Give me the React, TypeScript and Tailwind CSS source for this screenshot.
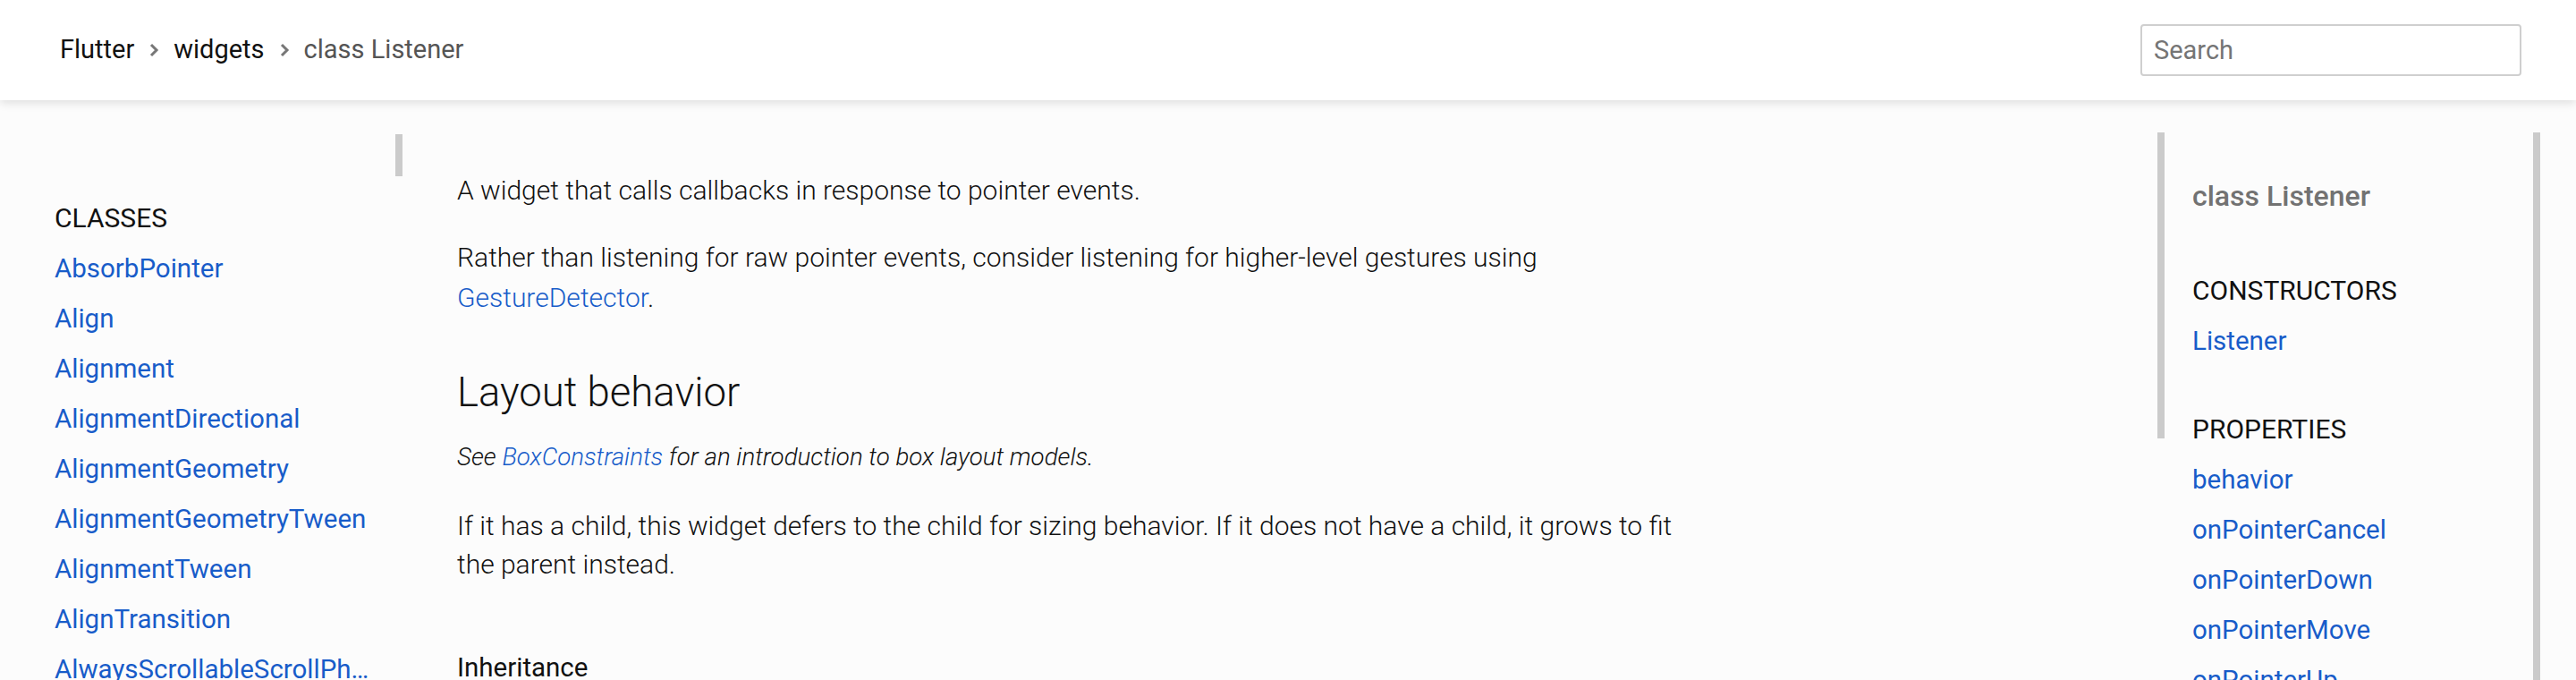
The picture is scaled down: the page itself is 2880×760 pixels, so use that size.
import React from "react";

const leftItems = [
  "AbsorbPointer",
  "Align",
  "Alignment",
  "AlignmentDirectional",
  "AlignmentGeometry",
  "AlignmentGeometryTween",
  "AlignmentTween",
  "AlignTransition",
  "AlwaysScrollableScrollPhysics",
];

const props = ["behavior", "onPointerCancel", "onPointerDown", "onPointerMove", "onPointerUp"];

function Chevron() {
  return (
    <svg width="12" height="18" viewBox="0 0 12 18" className="mx-[16px]">
      <polyline points="3,3 9,9 3,15" fill="none" stroke="#777" strokeWidth="3" />
    </svg>
  );
}

export default function App() {
  return (
    <div className="h-[760px] overflow-hidden bg-[#fcfcfc] font-['Roboto',sans-serif]">
      <header className="relative z-10 flex h-[112px] items-center justify-between bg-white pl-[67px] pr-[61px] shadow-[0_3px_10px_rgba(0,0,0,0.12)]">
        <div className="flex items-center text-[29px] text-[#111]">
          <span>Flutter</span>
          <Chevron />
          <span>widgets</span>
          <Chevron />
          <span className="text-[#555]">class Listener</span>
        </div>
        <input
          placeholder="Search"
          className="h-[58px] w-[426px] rounded-[4px] border-2 border-[#cfcfcf] bg-white px-[13px] text-[29px] text-[#333] outline-none placeholder:text-[#757575]"
        />
      </header>
      <div className="flex">
        <aside className="flex w-[450px] shrink-0">
          <div className="min-w-0 flex-1 pl-[61px] pr-[20px] pt-[104px] text-[29.5px] leading-[56px]">
            <div className="text-[30px] text-[#111]">CLASSES</div>
            {leftItems.map((t) => (
              <div key={t} className="truncate text-[#185cc9]">
                {t}
              </div>
            ))}
          </div>
          <div className="w-[8px] pt-[38px]">
            <div className="h-[47px] bg-[#cbcbcb]" />
          </div>
        </aside>
        <main className="flex min-w-0 flex-1">
          <div className="min-w-0 flex-1 pl-[61px] pt-[79px] text-[30px] font-light leading-[44.8px] text-[#111]">
            <div className="max-w-[1385px]">
              <p>A widget that calls callbacks in response to pointer events.</p>
              <p className="mt-[30px]">
                Rather than listening for raw pointer events, consider listening for higher-level gestures using{" "}
                <span className="text-[#185cc9]">GestureDetector</span>.
              </p>
              <h2 className="mt-[59px] text-[45.5px] font-light leading-[50px]">Layout behavior</h2>
              <p className="mt-[25px] text-[27.7px] italic">
                See <span className="text-[#185cc9]">BoxConstraints</span> for an introduction to box layout models.
              </p>
              <p className="mt-[32px] leading-[43px]">
                If it has a child, this widget defers to the child for sizing behavior. If it does not have a child, it grows to fit the parent instead.
              </p>
              <div className="mt-[72px] text-[29.5px] font-normal">Inheritance</div>
            </div>
          </div>
          <div className="w-[8px] pt-[36px]">
            <div className="h-[342px] bg-[#cbcbcb]" />
          </div>
        </main>
        <aside className="flex w-[420px] shrink-0">
          <div className="min-w-0 flex-1 pl-[31px] pt-[79px] text-[29.5px] leading-[56px]">
            <div className="text-[32px] font-medium text-[#727272]">class Listener</div>
            <div className="mt-[50px] text-[30px] text-[#111]">CONSTRUCTORS</div>
            <div className="text-[#185cc9]">Listener</div>
            <div className="mt-[43px] text-[30px] text-[#111]">PROPERTIES</div>
            {props.map((p) => (
              <div key={p} className="text-[#185cc9]">
                {p}
              </div>
            ))}
          </div>
          <div className="w-[8px] pt-[36px]">
            <div className="h-[700px] bg-[#cbcbcb]" />
          </div>
        </aside>
        <div className="w-[40px] shrink-0" />
      </div>
    </div>
  );
}
